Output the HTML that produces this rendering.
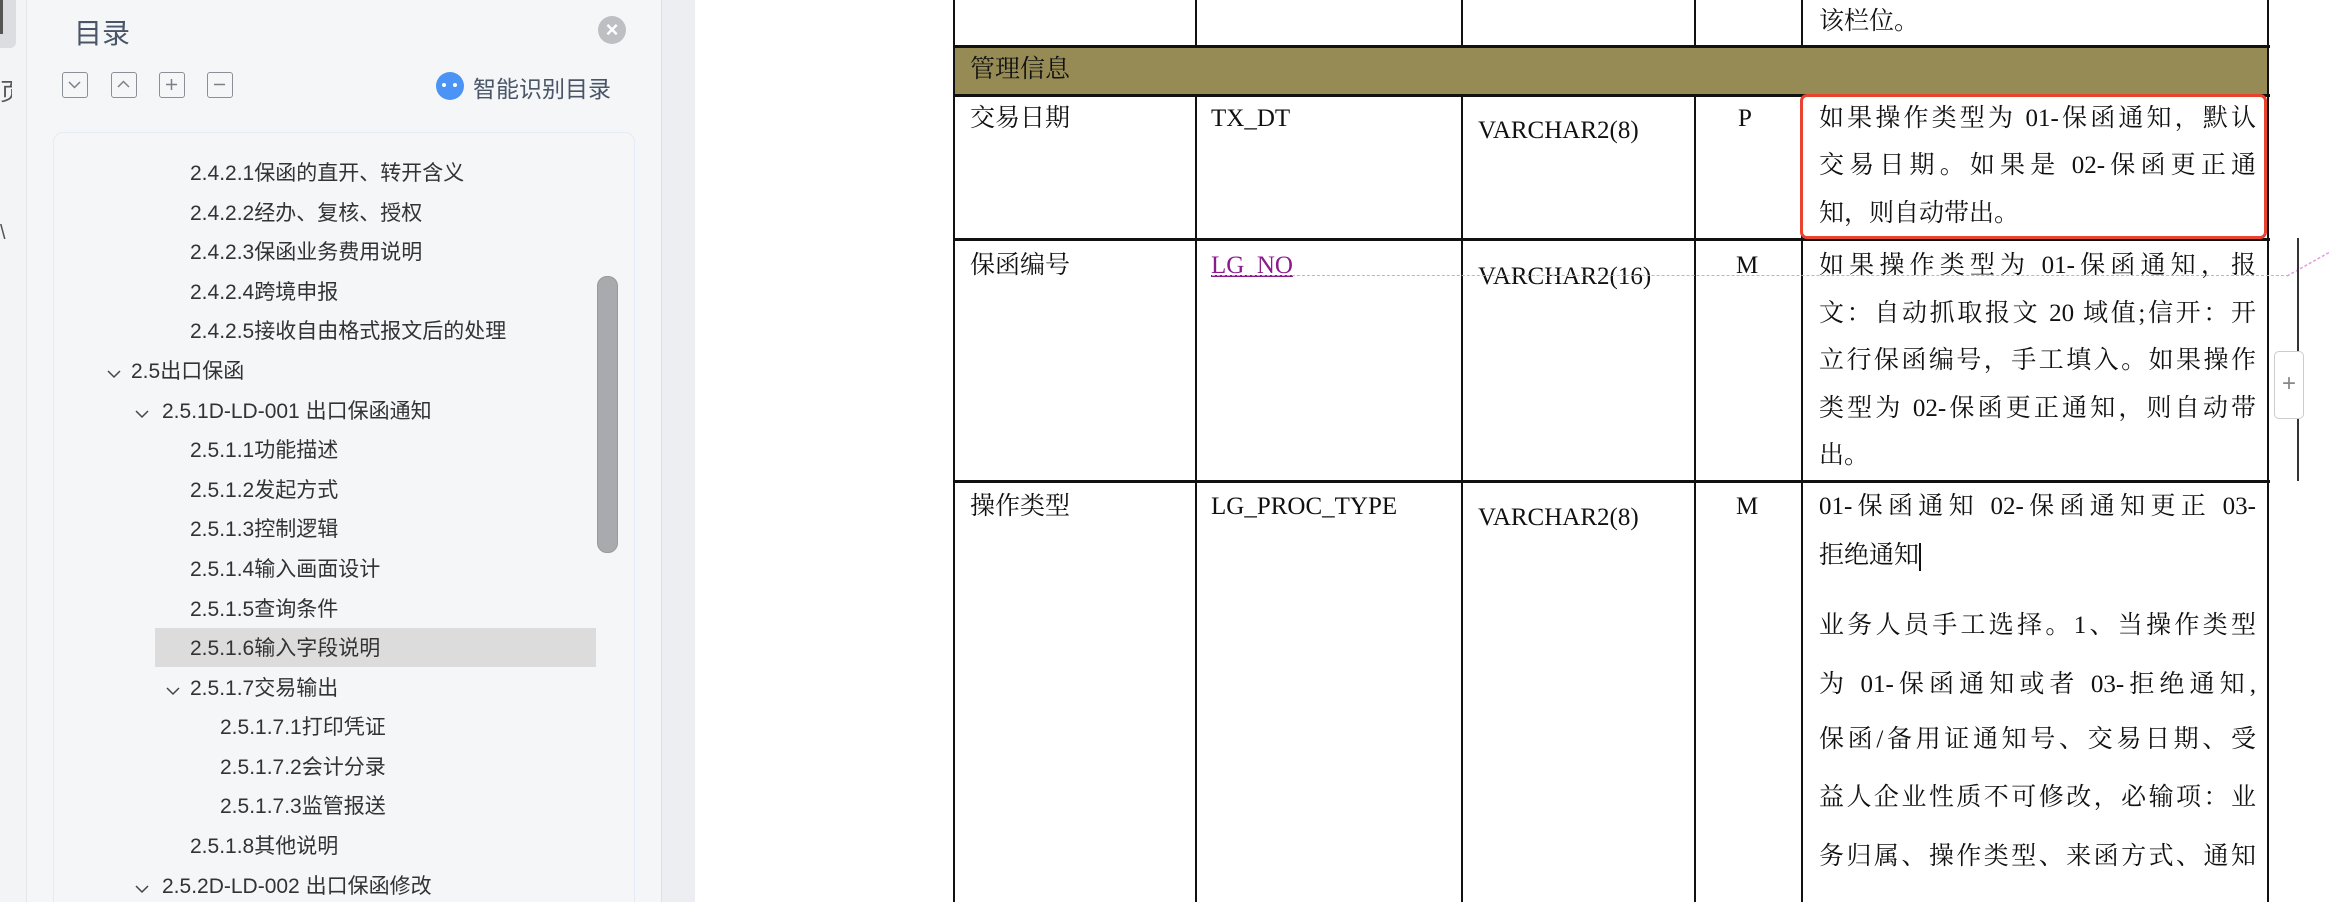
<!DOCTYPE html>
<html><head><meta charset="utf-8">
<style>
*{margin:0;padding:0;box-sizing:border-box}
html,body{width:2330px;height:902px;overflow:hidden}
body{background:#fff;position:relative;font-family:"Liberation Sans","Noto Sans CJK SC",sans-serif}
.abs{position:absolute}
#strip{left:0;top:0;width:27px;height:902px;background:#f3f4f6;border-right:1px solid #e4e6ea}
#panel{left:27px;top:0;width:634px;height:902px;background:#f5f6f8}
#bar{left:661px;top:0;width:34px;height:902px;background:#eceef1;border-left:1px solid #dcdfe4}
.tb{width:26px;height:26px;border:1.5px solid #8a8f98;border-radius:3px;top:72px}
#tree{left:53px;top:132px;width:582px;height:780px;border:1.5px solid #e3ebf5;border-radius:10px;background:#f5f6f8}
.it{position:absolute;height:30px;line-height:30px;font-size:21px;color:#333;white-space:nowrap}
.chev{position:absolute;width:14px;height:9px}
.doc{font-family:"Liberation Serif","Noto Serif CJK SC",serif;font-size:25px;color:#111;position:absolute;white-space:nowrap;line-height:30px}
.vl{position:absolute;width:2px;background:#111}
.hl{position:absolute;height:3px;background:#111;left:953px;width:1317px}
.j{position:absolute;left:1819px;width:437px;text-align:justify;text-align-last:justify;font-family:"Liberation Serif","Noto Serif CJK SC",serif;font-size:25px;color:#111;line-height:30px;white-space:nowrap}
</style></head><body>
<div class="abs" id="strip"></div>
<div class="abs" style="left:0;top:0;width:16px;height:48px;background:#dcdde0;border-radius:0 0 6px 0"></div>
<div class="abs" style="left:0;top:0;width:3px;height:34px;background:#555"></div>
<div class="abs" style="left:0;top:72px;font-size:24px;color:#555;width:12px;overflow:hidden">页</div>
<div class="abs" style="left:0;top:222px;font-size:20px;color:#555">\</div>
<div class="abs" id="panel"></div>
<div class="abs" id="bar"></div>
<div class="abs" style="left:74px;top:12px;font-size:28px;color:#4a5568">目录</div>
<div class="abs" style="left:598px;top:16px;width:28px;height:28px;border-radius:50%;background:#bdbfc3;color:#fff;font-size:22px;font-weight:bold;line-height:28px;text-align:center">×</div>
<div class="abs tb" style="left:62px"><svg width="23" height="23" style="position:absolute;left:0;top:0"><path d="M6 9l5.5 5.5 5.5-5.5" stroke="#7a7f88" stroke-width="1.5" fill="none"/></svg></div>
<div class="abs tb" style="left:111px"><svg width="23" height="23" style="position:absolute;left:0;top:0"><path d="M6 14l5.5-5.5 5.5 5.5" stroke="#7a7f88" stroke-width="1.5" fill="none"/></svg></div>
<div class="abs tb" style="left:159px"><svg width="23" height="23" style="position:absolute;left:0;top:0"><path d="M11.5 6v11M6 11.5h11" stroke="#7a7f88" stroke-width="1.5" fill="none"/></svg></div>
<div class="abs tb" style="left:207px"><svg width="23" height="23" style="position:absolute;left:0;top:0"><path d="M6 11.5h11" stroke="#7a7f88" stroke-width="1.5" fill="none"/></svg></div>
<div class="abs" style="left:436px;top:72px;width:28px;height:28px;border-radius:50%;background:#4b94f5"><span style="position:absolute;left:6px;top:11px;width:4px;height:4px;background:#fff;border-radius:50%"></span><span style="position:absolute;left:17px;top:11px;width:4px;height:4px;background:#fff;border-radius:50%"></span></div>
<div class="abs" style="left:473px;top:70px;font-size:23px;color:#4a5568">智能识别目录</div>
<div class="abs" id="tree"></div>
<div class="abs" style="left:155px;top:628px;width:441px;height:39px;background:#dcdcdc"></div>
<div class="abs" style="left:597px;top:276px;width:21px;height:277px;background:#a9aaad;border-radius:10px;border:1px solid #999"></div>

<div class="it" style="left:190px;top:159px">2.4.2.1保函的直开、转开含义</div>
<div class="it" style="left:190px;top:199px">2.4.2.2经办、复核、授权</div>
<div class="it" style="left:190px;top:238px">2.4.2.3保函业务费用说明</div>
<div class="it" style="left:190px;top:278px">2.4.2.4跨境申报</div>
<div class="it" style="left:190px;top:317px">2.4.2.5接收自由格式报文后的处理</div>
<svg class="chev" style="left:107px;top:370px"><path d="M1 1l6 6 6-6" stroke="#444" stroke-width="1.5" fill="none"/></svg>
<div class="it" style="left:131px;top:357px">2.5出口保函</div>
<svg class="chev" style="left:135px;top:410px"><path d="M1 1l6 6 6-6" stroke="#444" stroke-width="1.5" fill="none"/></svg>
<div class="it" style="left:162px;top:397px">2.5.1D-LD-001 出口保函通知</div>
<div class="it" style="left:190px;top:436px">2.5.1.1功能描述</div>
<div class="it" style="left:190px;top:476px">2.5.1.2发起方式</div>
<div class="it" style="left:190px;top:515px">2.5.1.3控制逻辑</div>
<div class="it" style="left:190px;top:555px">2.5.1.4输入画面设计</div>
<div class="it" style="left:190px;top:595px">2.5.1.5查询条件</div>
<div class="it" style="left:190px;top:634px">2.5.1.6输入字段说明</div>
<svg class="chev" style="left:166px;top:687px"><path d="M1 1l6 6 6-6" stroke="#444" stroke-width="1.5" fill="none"/></svg>
<div class="it" style="left:190px;top:674px">2.5.1.7交易输出</div>
<div class="it" style="left:220px;top:713px">2.5.1.7.1打印凭证</div>
<div class="it" style="left:220px;top:753px">2.5.1.7.2会计分录</div>
<div class="it" style="left:220px;top:792px">2.5.1.7.3监管报送</div>
<div class="it" style="left:190px;top:832px">2.5.1.8其他说明</div>
<svg class="chev" style="left:135px;top:885px"><path d="M1 1l6 6 6-6" stroke="#444" stroke-width="1.5" fill="none"/></svg>
<div class="it" style="left:162px;top:872px">2.5.2D-LD-002 出口保函修改</div>

<div class="abs" style="left:953px;top:46px;width:1316px;height:49px;background:#968b55"></div>
<div class="vl" style="left:953px;top:0;height:902px"></div>
<div class="vl" style="left:1195px;top:0;height:46px"></div><div class="vl" style="left:1195px;top:95px;height:807px"></div>
<div class="vl" style="left:1461px;top:0;height:46px"></div><div class="vl" style="left:1461px;top:95px;height:807px"></div>
<div class="vl" style="left:1694px;top:0;height:46px"></div><div class="vl" style="left:1694px;top:95px;height:807px"></div>
<div class="vl" style="left:1801px;top:0;height:46px"></div><div class="vl" style="left:1801px;top:95px;height:807px"></div>
<div class="vl" style="left:2267px;top:0;height:902px"></div>
<div class="hl" style="top:45px"></div>
<div class="hl" style="top:94px"></div>
<div class="hl" style="top:238px"></div>
<div class="hl" style="top:480px"></div>

<div class="j" style="top:7px;text-align-last:left">该栏位。</div>
<div class="doc" style="left:970px;top:55px">管理信息</div>

<div class="doc" style="left:970px;top:104px">交易日期</div>
<div class="doc" style="left:1211px;top:104px">TX_DT</div>
<div class="doc" style="left:1478px;top:116px">VARCHAR2(8)</div>
<div class="doc" style="left:1738px;top:104px">P</div>
<div class="j" style="top:104px">如果操作类型为 01-保函通知，默认</div>
<div class="j" style="top:151px">交易日期。如果是 02-保函更正通</div>
<div class="j" style="top:199px;text-align-last:left">知，则自动带出。</div>
<div class="abs" style="left:1800px;top:94px;width:467px;height:145px;border:3.5px solid #e8432e;border-radius:7px"></div>

<div class="doc" style="left:970px;top:251px">保函编号</div>
<div class="doc" style="left:1211px;top:251px;color:#8b1a8b;text-decoration:underline">LG_NO</div>
<div class="doc" style="left:1478px;top:262px">VARCHAR2(16)</div>
<div class="doc" style="left:1736px;top:251px">M</div>
<div class="j" style="top:251px">如果操作类型为 01-保函通知，报</div>
<div class="j" style="top:299px">文：自动抓取报文 20 域值;信开：开</div>
<div class="j" style="top:346px">立行保函编号，手工填入。如果操作</div>
<div class="j" style="top:394px">类型为 02-保函更正通知，则自动带</div>
<div class="j" style="top:441px;text-align-last:left">出。</div>
<div class="abs" style="left:1212px;top:275px;width:1077px;border-top:1.5px dashed #e39be3"></div>
<svg class="abs" style="left:2285px;top:250px" width="45" height="30"><path d="M2 26L45 2" stroke="#e39be3" stroke-width="1.5" stroke-dasharray="3 2" fill="none"/></svg>
<div class="abs" style="left:2297px;top:238px;width:2px;height:243px;background:#333"></div>
<div class="abs" style="left:2274px;top:351px;width:30px;height:68px;background:#fff;border:1.5px solid #ccc;border-radius:5px;color:#888;font-size:24px;text-align:center;line-height:64px">+</div>

<div class="doc" style="left:970px;top:492px">操作类型</div>
<div class="doc" style="left:1211px;top:492px">LG_PROC_TYPE</div>
<div class="doc" style="left:1478px;top:503px">VARCHAR2(8)</div>
<div class="doc" style="left:1736px;top:492px">M</div>
<div class="j" style="top:492px">01-保函通知 02-保函通知更正 03-</div>
<div class="j" style="top:541px;text-align-last:left">拒绝通知<span style="display:inline-block;width:2px;height:28px;background:#111;vertical-align:middle"></span></div>
<div class="j" style="top:611px">业务人员手工选择。1、当操作类型</div>
<div class="j" style="top:670px">为 01-保函通知或者 03-拒绝通知,</div>
<div class="j" style="top:725px">保函/备用证通知号、交易日期、受</div>
<div class="j" style="top:783px">益人企业性质不可修改，必输项：业</div>
<div class="j" style="top:842px">务归属、操作类型、来函方式、通知</div>
</body></html>
